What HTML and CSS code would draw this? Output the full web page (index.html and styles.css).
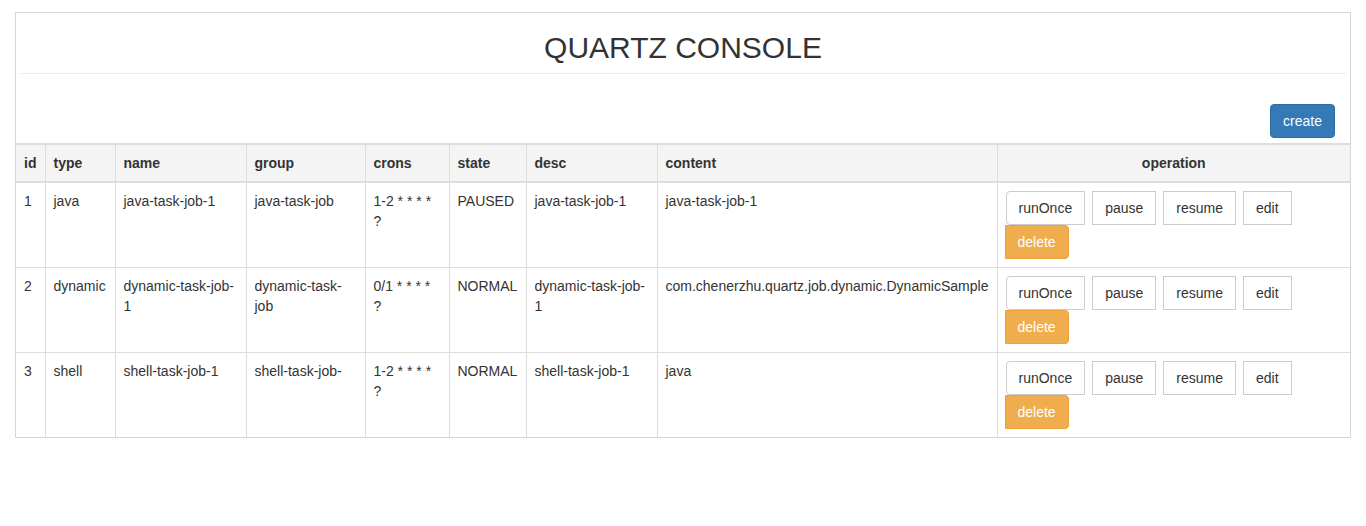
FILE: index.html
```html
<!DOCTYPE html>
<html>
<head>
<meta charset="utf-8">
<title>Quartz Console</title>
<link rel="stylesheet" href="styles.css">
</head>
<body>
<div class="panel">
  <div class="page-header">
    <h2 class="title">QUARTZ CONSOLE</h2>
  </div>
  <div class="toolbar">
    <button class="btn btn-primary">create</button>
  </div>
  <table class="jobs">
    <colgroup>
      <col class="c-id">
      <col class="c-type">
      <col class="c-name">
      <col class="c-group">
      <col class="c-crons">
      <col class="c-state">
      <col class="c-desc">
      <col class="c-content">
      <col class="c-op">
    </colgroup>
    <thead>
      <tr>
        <th>id</th><th>type</th><th>name</th><th>group</th><th>crons</th><th>state</th><th>desc</th><th>content</th><th class="center">operation</th>
      </tr>
    </thead>
    <tbody>
      <tr>
        <td>1</td><td>java</td><td>java-task-job-1</td><td>java-task-job</td><td>1-2 * * * * ?</td><td>PAUSED</td><td>java-task-job-1</td><td>java-task-job-1</td>
        <td><div class="ops"><button class="btn btn-default first">runOnce</button><button class="btn btn-default">pause</button><button class="btn btn-default">resume</button><button class="btn btn-default">edit</button><button class="btn btn-warning last">delete</button></div></td>
      </tr>
      <tr>
        <td>2</td><td>dynamic</td><td>dynamic-task-job-1</td><td>dynamic-task-job</td><td>0/1 * * * * ?</td><td>NORMAL</td><td>dynamic-task-job-1</td><td>com.chenerzhu.quartz.job.dynamic.DynamicSample</td>
        <td><div class="ops"><button class="btn btn-default first">runOnce</button><button class="btn btn-default">pause</button><button class="btn btn-default">resume</button><button class="btn btn-default">edit</button><button class="btn btn-warning last">delete</button></div></td>
      </tr>
      <tr>
        <td>3</td><td>shell</td><td>shell-task-job-1</td><td>shell-task-job-</td><td>1-2 * * * * ?</td><td>NORMAL</td><td>shell-task-job-1</td><td>java</td>
        <td><div class="ops"><button class="btn btn-default first">runOnce</button><button class="btn btn-default">pause</button><button class="btn btn-default">resume</button><button class="btn btn-default">edit</button><button class="btn btn-warning last">delete</button></div></td>
      </tr>
    </tbody>
  </table>
</div>
</body>
</html>
```
FILE: styles.css
```css
* { box-sizing: border-box; }
html, body { margin: 0; padding: 0; background: #fff; }
body {
  font-family: "Liberation Sans", Arial, Helvetica, sans-serif;
  font-size: 14px;
  line-height: 20px;
  color: #333;
}
.panel {
  margin: 12px 15px 0;
  border: 1px solid #d6d6d6;
  background: #fff;
}
.page-header {
  margin: 0 3px;
  padding: 18px 0 9px;
  border-bottom: 1px solid #eee;
}
.title {
  margin: 0;
  font-size: 30px;
  line-height: 33px;
  font-weight: 400;
  text-align: center;
  color: #333;
}
.toolbar {
  display: flex;
  justify-content: flex-end;
  padding: 30px 15px 5px;
}
.btn {
  display: inline-block;
  font-family: inherit;
  font-size: 14px;
  line-height: 20px;
  padding: 6px 12px;
  border: 1px solid transparent;
  border-radius: 4px;
  cursor: pointer;
  white-space: nowrap;
}
.btn-primary {
  background: #337ab7;
  border-color: #2e6da4;
  color: #fff;
}
.btn-default {
  background: #fff;
  border-color: #ccc;
  color: #333;
}
.btn-warning {
  background: #f0ad4e;
  border-color: #eea236;
  color: #fff;
}
.jobs {
  width: 100%;
  table-layout: fixed;
  border-collapse: collapse;
  border-spacing: 0;
}
.c-id { width: 29px; }
.c-type { width: 70px; }
.c-name { width: 131px; }
.c-group { width: 119px; }
.c-crons { width: 84px; }
.c-state { width: 77px; }
.c-desc { width: 131px; }
.c-content { width: 340px; }
.c-op { width: 353px; }
.jobs th, .jobs td {
  padding: 8px;
  border: 1px solid #ddd;
  text-align: left;
  word-wrap: break-word;
}
.jobs th {
  background: #f4f4f4;
  font-weight: bold;
  vertical-align: bottom;
  border-top: 2px solid #ddd;
  border-bottom: 2px solid #ddd;
}
.jobs th.center { text-align: center; }
.jobs td { vertical-align: top; }
.jobs th:first-child, .jobs td:first-child { border-left: 0; }
.jobs th:last-child, .jobs td:last-child { border-right: 0; }
.jobs tbody tr:last-child td { border-bottom: 0; }
.ops {
  display: flex;
  flex-wrap: wrap;
}
.ops .btn {
  margin-right: 8px;
  border-radius: 0;
}
.ops .btn + .btn { margin-left: -1px; }
.ops .btn.first { border-radius: 4px 0 0 4px; }
.ops .btn.last { border-radius: 0 4px 4px 0; }
```
